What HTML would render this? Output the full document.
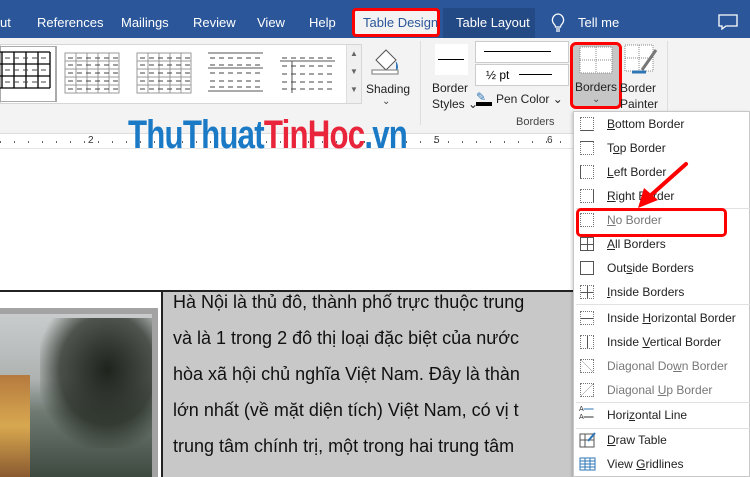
<!DOCTYPE html><html><head><meta charset="utf-8"><style>
*{margin:0;padding:0;box-sizing:border-box}
body{width:750px;height:477px;overflow:hidden;position:relative;font-family:"Liberation Sans",sans-serif;background:#fff}
.a{position:absolute}
.tab{position:absolute;top:15px;color:#fff;font-size:13px}
.mi{position:absolute;left:607px;font-size:12px;color:#222}
.ic{position:absolute;left:580px;width:14px;height:14px;border:1px dotted #777}
.sep{position:absolute;left:576px;width:174px;height:1px;background:#e1e1e1}
.doc{position:absolute;left:173px;font-size:18px;color:#111;white-space:nowrap}
</style></head><body>
<div class="a" style="left:0;top:0;width:750px;height:38px;background:#2b579a"></div>
<div class="tab" style="left:0">ut</div>
<div class="tab" style="left:37px">References</div>
<div class="tab" style="left:121px">Mailings</div>
<div class="tab" style="left:193px">Review</div>
<div class="tab" style="left:257px">View</div>
<div class="tab" style="left:309px">Help</div>
<div class="a" style="left:443px;top:8px;width:92px;height:30px;background:#244a86"></div>
<div class="tab" style="left:456px">Table Layout</div>
<div class="a" style="left:352px;top:8px;width:88px;height:29px;background:#f3f3f3;border:3px solid #f00;border-radius:4px"></div>
<div class="tab" style="left:363px;color:#2b579a">Table Design</div>
<svg class="a" style="left:550px;top:13px" width="16" height="20"><path d="M8 1a6 6 0 0 0-4 10c1 1 1.5 2 1.5 3h5c0-1 .5-2 1.5-3A6 6 0 0 0 8 1zM6 16h4M6 18h4" stroke="#fff" fill="none" stroke-width="1.3"/></svg>
<div class="tab" style="left:578px">Tell me</div>
<svg class="a" style="left:718px;top:14px" width="20" height="16"><path d="M1 1h18v11H8l-4 3v-3H1z" stroke="#fff" fill="none" stroke-width="1.3"/></svg>
<div class="a" style="left:0;top:38px;width:750px;height:95px;background:#f3f3f3"></div>
<div class="a" style="left:0;top:44px;width:362px;height:60px;background:#fff;border:1px solid #d6d6d6"></div>
<svg class="a" style="left:0;top:46px" width="345" height="56">
<rect x="0" y="0" width="56" height="56" fill="#fff" stroke="#aaa" stroke-width="2"/>
<g stroke="#000" stroke-width="1.3" fill="none"><path d="M0 6h50M0 18h50M0 30h50M0 42h50M2 6v36M14 6v36M26 6v36M38 6v36M50 6v36"/></g>
<g stroke="#999" fill="none"><rect x="65" y="7" width="54" height="40"/><path d="M65 15h54M65 23h54M65 31h54M65 39h54M76 7v40M87 7v40M98 7v40M109 7v40"/></g>
<g stroke="#999" fill="none"><rect x="137" y="7" width="54" height="40"/><path d="M137 15h54M137 23h54M137 31h54M137 39h54M148 7v40M159 7v40M170 7v40M181 7v40"/></g>
<g stroke="#555"><path d="M208 7h55M208 22h55M208 45h55"/></g>
<g stroke="#555"><path d="M280 15h55M292 15v32"/></g>
<g stroke="#444" stroke-dasharray="5 4"><path d="M5 12h45M5 24h45M5 36h45M68 12h50M68 19h50M68 27h50M68 35h50M68 43h50M140 12h50M140 19h50M140 27h50M140 35h50M140 43h50M210 12h52M210 19h52M210 27h52M210 35h52M210 41h52M282 12h52M282 20h52M282 28h52M282 36h52M282 43h52"/></g>
</svg>
<div class="a" style="left:346px;top:45px;width:15px;height:58px;background:#f0f0f0;border-left:1px solid #ddd;font-size:8px;color:#666;text-align:center;line-height:18px">▲<br>▼<br>▼</div>
<div class="a" style="left:366px;top:82px;font-size:12px;color:#222">Shading</div>
<div class="a" style="left:382px;top:96px;font-size:10px;color:#444">⌄</div>
<svg class="a" style="left:370px;top:42px" width="34" height="34"><path d="M6 18l10-10 10 10-10 10z" fill="#fff" stroke="#555"/><path d="M26 20q3 6 0 8" stroke="#2e75b6" fill="#2e75b6"/><rect x="2" y="28" width="26" height="4" fill="#fff" stroke="#777"/></svg>
<div class="a" style="left:420px;top:41px;width:1px;height:84px;background:#ddd"></div>
<div class="a" style="left:435px;top:44px;width:33px;height:31px;background:#fff"></div>
<div class="a" style="left:438px;top:59px;width:26px;height:1px;background:#000"></div>
<div class="a" style="left:432px;top:80px;font-size:12px;color:#222;line-height:16px">Border<br>Styles ⌄</div>
<div class="a" style="left:475px;top:41px;width:94px;height:22px;background:#fff;border:1px solid #ccc"></div>
<div class="a" style="left:484px;top:51px;width:67px;height:1px;background:#000"></div>
<div class="a" style="left:475px;top:64px;width:94px;height:22px;background:#fff;border:1px solid #ccc"></div>
<div class="a" style="left:486px;top:68px;font-size:12px">½ pt</div>
<div class="a" style="left:519px;top:74px;width:33px;height:1px;background:#000"></div>
<div class="a" style="left:476px;top:90px;width:16px;height:16px;border-bottom:4px solid #000;color:#2e75b6;font-size:12px">✎</div>
<div class="a" style="left:496px;top:92px;font-size:12px;color:#222">Pen Color ⌄</div>
<div class="a" style="left:516px;top:116px;font-size:11px;color:#444">Borders</div>
<div class="a" style="left:570px;top:42px;width:52px;height:67px;background:#c6c6c6;border:3px solid #f00;border-radius:6px"></div>
<svg class="a" style="left:579px;top:46px" width="34" height="28"><rect x="1" y="1" width="32" height="26" fill="#fff" stroke="#888" stroke-dasharray="1 1"/><path d="M17 1v26M1 14h32" stroke="#888" stroke-dasharray="1 1"/></svg>
<div class="a" style="left:575px;top:80px;font-size:12px;color:#222">Borders</div>
<div class="a" style="left:592px;top:94px;font-size:10px;color:#444">⌄</div>
<svg class="a" style="left:624px;top:44px" width="34" height="34"><rect x="1" y="1" width="28" height="26" fill="#fff" stroke="#888" stroke-dasharray="1 1"/><path d="M15 1v26M1 14h28" stroke="#888" stroke-dasharray="1 1"/><path d="M32 6L18 26" stroke="#777" stroke-width="3"/><path d="M8 28h14" stroke="#2e75b6" stroke-width="3"/></svg>
<div class="a" style="left:620px;top:80px;font-size:12px;color:#222;line-height:16px">Border<br>Painter</div>
<div class="a" style="left:667px;top:41px;width:1px;height:84px;background:#ddd"></div>
<div class="a" style="left:0;top:133px;width:750px;height:16px;background:#fff;border-top:1px solid #ddd;border-bottom:1px solid #e6e6e6"></div>
<div class="a" style="left:88px;top:135px;font-size:10px;color:#333">2</div>
<div class="a" style="left:434px;top:135px;font-size:10px;color:#333">5</div>
<div class="a" style="left:547px;top:135px;font-size:10px;color:#333">6</div>
<div class="a" style="left:0;top:141px;width:573px;height:2px;background:repeating-linear-gradient(90deg,#666 0 1px,transparent 1px 14px)"></div>
<div class="a" style="left:128px;top:113px;font-size:40px;font-weight:bold;letter-spacing:-1px;white-space:nowrap;transform:scaleX(.78);transform-origin:0 0"><span style="color:#1b7ac5">ThuThuat</span><span style="color:#e8253a">TinHoc</span><span style="color:#1b7ac5">.vn</span></div>
<div class="a" style="left:0;top:290px;width:750px;height:2px;background:#222"></div>
<div class="a" style="left:161px;top:290px;width:2px;height:187px;background:#222"></div>
<div class="a" style="left:163px;top:292px;width:587px;height:185px;background:#c8c8c8"></div>
<div class="a" style="left:0;top:308px;width:158px;height:169px;background:#a3a3a3"></div>
<div class="a" style="left:0;top:314px;width:152px;height:163px;background:linear-gradient(180deg,#c9cccc 0%,#aeb3b2 40%,#6f7a72 60%,#3e4a40 100%)"></div>
<div class="a" style="left:0;top:375px;width:30px;height:102px;background:linear-gradient(180deg,#b57a3e,#d8a850,#8a5a30)"></div>
<div class="a" style="left:40px;top:318px;width:112px;height:130px;background:radial-gradient(ellipse at 60% 40%,#1e241c 0%,rgba(30,36,28,.7) 50%,transparent 75%)"></div>
<div class="doc" style="top:292px">Hà Nội là thủ đô, thành phố trực thuộc trung</div>
<div class="doc" style="top:328px">và là 1 trong 2 đô thị loại đặc biệt của nước</div>
<div class="doc" style="top:364px">hòa xã hội chủ nghĩa Việt Nam. Đây là thàn</div>
<div class="doc" style="top:400px">lớn nhất (về mặt diện tích) Việt Nam, có vị t</div>
<div class="doc" style="top:436px">trung tâm chính trị, một trong hai trung tâm</div>
<div class="a" style="left:573px;top:111px;width:177px;height:366px;background:#fff;border:1px solid #c8c8c8;box-shadow:-1px 1px 3px rgba(0,0,0,.2)"></div>
<div class="ic" style="top:117px;border-bottom:1px solid #555"></div><div class="mi" style="top:117px"><u>B</u>ottom Border</div>
<div class="ic" style="top:141px;border-top:1px solid #555"></div><div class="mi" style="top:141px">T<u>o</u>p Border</div>
<div class="ic" style="top:165px;border-left:1px solid #555"></div><div class="mi" style="top:165px"><u>L</u>eft Border</div>
<div class="ic" style="top:189px;border-right:1px solid #555"></div><div class="mi" style="top:189px"><u>R</u>ight Border</div>
<div class="sep" style="top:208px"></div>
<div class="ic" style="top:213px"></div><div class="mi" style="top:213px;color:#777"><u>N</u>o Border</div>
<div class="ic" style="top:237px;border:1px solid #555;background:linear-gradient(#555,#555) center/1px 100% no-repeat,linear-gradient(#555,#555) center/100% 1px no-repeat"></div><div class="mi" style="top:237px"><u>A</u>ll Borders</div>
<div class="ic" style="top:261px;border:1px solid #555"></div><div class="mi" style="top:261px">Out<u>s</u>ide Borders</div>
<div class="ic" style="top:285px;background:linear-gradient(#555,#555) center/1px 100% no-repeat,linear-gradient(#555,#555) center/100% 1px no-repeat"></div><div class="mi" style="top:285px"><u>I</u>nside Borders</div>
<div class="sep" style="top:304px"></div>
<div class="ic" style="top:311px;background:linear-gradient(#555,#555) center/100% 1px no-repeat"></div><div class="mi" style="top:311px">Inside <u>H</u>orizontal Border</div>
<div class="ic" style="top:335px;background:linear-gradient(#555,#555) center/1px 100% no-repeat"></div><div class="mi" style="top:335px">Inside <u>V</u>ertical Border</div>
<div class="ic" style="top:359px;background:linear-gradient(45deg,transparent 48%,#777 50%,transparent 52%)"></div><div class="mi" style="top:359px;color:#777">Diagonal Do<u>w</u>n Border</div>
<div class="ic" style="top:383px;background:linear-gradient(-45deg,transparent 48%,#777 50%,transparent 52%)"></div><div class="mi" style="top:383px;color:#777">Diagonal <u>U</u>p Border</div>
<div class="sep" style="top:402px"></div>
<div class="a" style="left:579px;top:406px;font-size:7px;line-height:8px;color:#333">A<span style="color:#2e75b6">══</span><br>A══</div><div class="mi" style="top:408px">Hori<u>z</u>ontal Line</div>
<div class="sep" style="top:428px"></div>
<svg class="a" style="left:579px;top:432px" width="18" height="16"><rect x="1" y="2" width="14" height="13" fill="none" stroke="#555"/><path d="M6 2v13M1 8h14" stroke="#555"/><path d="M16 1l-7 8" stroke="#2e75b6" stroke-width="2"/></svg><div class="mi" style="top:433px"><u>D</u>raw Table</div>
<svg class="a" style="left:579px;top:457px" width="18" height="14"><rect x="1" y="1" width="15" height="12" fill="none" stroke="#2e75b6"/><path d="M1 4h15M1 7h15M1 10h15M6 1v12M11 1v12" stroke="#2e75b6"/></svg><div class="mi" style="top:457px">View <u>G</u>ridlines</div>
<div class="a" style="left:576px;top:208px;width:151px;height:29px;border:3px solid #f00;border-radius:5px"></div>
<svg class="a" style="left:630px;top:160px" width="60" height="52"><path d="M56 4L20 36" stroke="#f00" stroke-width="4" stroke-linecap="round"/><path d="M8 48l6-20 14 12z" fill="#f00"/></svg>
</body></html>
